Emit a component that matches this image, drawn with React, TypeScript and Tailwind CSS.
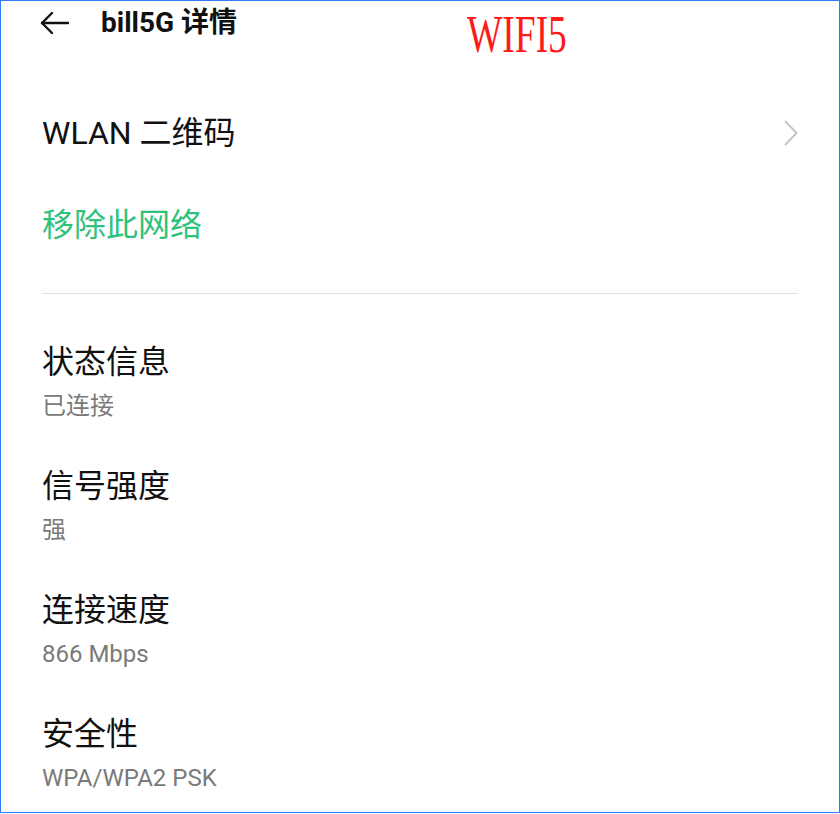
import React from "react";

const font = { fontFamily: 'Roboto, "Noto Sans CJK SC", sans-serif' };

function Item({ title, sub }: { title: string; sub: string }) {
  return (
    <div className="flex flex-col">
      <div className="h-[40px] leading-[40px] text-[32px] text-[#111]">{title}</div>
      <div className="mt-[8px] h-[32px] leading-[32px] text-[24px] text-[#7a7a7a]">{sub}</div>
    </div>
  );
}

export default function App() {
  return (
    <div
      className="relative w-[840px] h-[813px] bg-white border border-[#2f7cf6] overflow-hidden"
      style={font}
    >
      <div className="flex h-[44px] items-center">
        <svg width="30" height="24" viewBox="0 0 30 24" className="ml-[39px]" fill="none" stroke="#111" strokeWidth="2.4" strokeLinecap="round" strokeLinejoin="round">
          <path d="M2 12 H28" />
          <path d="M12 2 L2 12 L12 22" />
        </svg>
        <div className="ml-[31px] text-[28px] font-bold text-[#111] leading-[44px]">bill5G 详情</div>
      </div>

      <div
        className="absolute left-[466px] top-[8px] text-[52px] leading-[52px] text-[#ff1a1a] origin-left scale-x-[0.72]"
        style={{ fontFamily: '"Liberation Serif", serif' }}
      >
        WIFI5
      </div>

      <div className="px-[41px]">
        <div className="mt-[58px] flex h-[60px] items-center justify-between">
          <span className="text-[32px] text-[#111]">WLAN 二维码</span>
          <svg width="14" height="26" viewBox="0 0 14 26" fill="none" stroke="#c6c6c6" strokeWidth="2" strokeLinecap="round" strokeLinejoin="round">
            <path d="M1.5 1.5 L12.5 13 L1.5 24.5" />
          </svg>
        </div>
        <div className="mt-[32px] flex h-[60px] items-center">
          <span className="text-[32px] text-[#2fc27c]">移除此网络</span>
        </div>
        <div className="mt-[38px] h-px bg-[#e2e2e2]" />

        <div className="mt-[48px] flex flex-col gap-[44px]">
          <Item title="状态信息" sub="已连接" />
          <Item title="信号强度" sub="强" />
          <Item title="连接速度" sub="866 Mbps" />
          <Item title="安全性" sub="WPA/WPA2 PSK" />
        </div>
      </div>
    </div>
  );
}
